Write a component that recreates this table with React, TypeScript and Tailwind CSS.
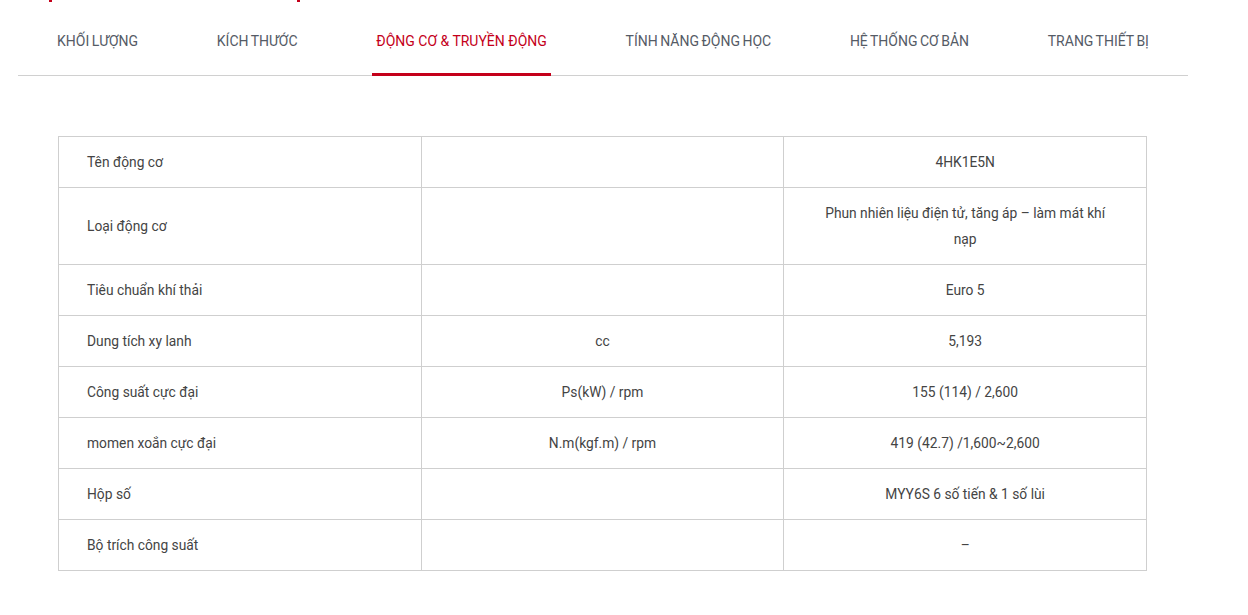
import React from "react"

const tabs = [
  "KHỐI LƯỢNG",
  "KÍCH THƯỚC",
  "ĐỘNG CƠ & TRUYỀN ĐỘNG",
  "TÍNH NĂNG ĐỘNG HỌC",
  "HỆ THỐNG CƠ BẢN",
  "TRANG THIẾT BỊ",
]

const rows: [string, string, React.ReactNode][] = [
  ["Tên động cơ", "", "4HK1E5N"],
  ["Loại động cơ", "", "Phun nhiên liệu điện tử, tăng áp – làm mát khí nạp"],
  ["Tiêu chuẩn khí thải", "", "Euro 5"],
  ["Dung tích xy lanh", "cc", "5,193"],
  ["Công suất cực đại", "Ps(kW) / rpm", "155 (114) / 2,600"],
  ["momen xoắn cực đại", "N.m(kgf.m) / rpm", "419 (42.7) /1,600~2,600"],
  ["Hộp số", "", "MYY6S 6 số tiến & 1 số lùi"],
  ["Bộ trích công suất", "", "–"],
]

export default function App() {
  return (
    <div
      className="relative min-h-[615px] bg-white text-[#444]"
      style={{ fontFamily: "Roboto, 'Liberation Sans', sans-serif" }}
    >
      {/* bits of the header above, cut off */}
      <span className="absolute left-[49px] top-0 h-[2px] w-[3px] bg-[#c4001a]" />
      <span className="absolute left-[297px] top-0 h-[2px] w-[3px] bg-[#c4001a]" />

      <div className="ml-[18px] w-[1170px]">
        {/* Tabs */}
        <div className="flex h-[76px] items-stretch justify-between border-b border-[#d0d0d0] px-[35px]">
          {tabs.map((t, i) => (
            <div
              key={t}
              className={
                i === 2
                  ? "-mb-px flex items-center border-b-[3px] border-[#c4001a] px-1 pt-[9px] text-[14px] text-[#c4001a]"
                  : "flex items-center px-1 pt-[7px] text-[14px] text-[#555b66] [word-spacing:-1px]"
              }
            >
              {t}
            </div>
          ))}
        </div>

        {/* Spec table */}
        <div className="px-[40px] pt-[60px]">
          <table className="w-[1089px] table-fixed border-collapse text-[13.8px] leading-[26px] text-[#444]">
            <tbody>
              {rows.map(([a, b, c]) => (
                <tr key={a}>
                  <td className="border border-[#cfcfcf] px-[28px] py-[12px] text-left">{a}</td>
                  <td className="border border-[#cfcfcf] px-[28px] py-[12px] text-center">{b}</td>
                  <td className="border border-[#cfcfcf] px-[28px] py-[12px] text-center">{c}</td>
                </tr>
              ))}
            </tbody>
          </table>
        </div>
      </div>
    </div>
  )
}
